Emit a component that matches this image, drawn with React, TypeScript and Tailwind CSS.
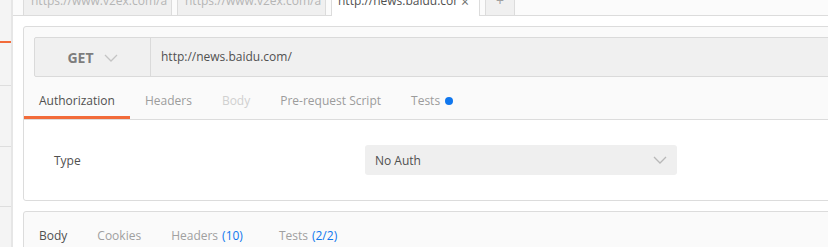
import React from "react";

const Chevron = ({ className }: { className?: string }) => (
  <svg viewBox="0 0 14 8" width="14" height="8" className={className} fill="none">
    <path d="M1 1l6 6 6-6" stroke="currentColor" strokeWidth="1.3" />
  </svg>
);

export default function App() {
  const reqTabs = [
    { label: "Authorization", cls: "text-[#505050]", active: true },
    { label: "Headers", cls: "text-[#9c9c9c]" },
    { label: "Body", cls: "text-[#d0d0d0]" },
    { label: "Pre-request Script", cls: "text-[#9c9c9c]" },
    { label: "Tests", cls: "text-[#9c9c9c]", dot: true },
  ];
  return (
    <div
      className="w-[828px] h-[247px] overflow-hidden flex bg-white"
      style={{ fontFamily: '"Open Sans", "Noto Sans", sans-serif' }}
    >
      {/* sidebar */}
      <div className="w-[13px] shrink-0 bg-[#f4f4f4] border-r-2 border-[#e6e6e6] flex flex-col">
        <div className="h-[41px]" />
        <div className="h-[2px] bg-[#f26b3a]" />
        <div className="h-[43px] border-b border-[#dedede]" />
        <div className="h-[61px] border-b border-[#dedede]" />
        <div className="h-[60px] border-b border-[#dedede]" />
      </div>

      {/* main */}
      <div className="flex-1 min-w-0 flex flex-col">
        {/* window tabs */}
        <div className="h-[16px] shrink-0 border-b border-[#dcdcdc] bg-[#fbfbfb] pl-[10px] flex items-end gap-[5px] text-[12px]">
          <div className="w-[149px] h-[30px] shrink-0 bg-[#f0f0f0] border border-b-0 border-[#dcdcdc] px-[7px] flex items-center overflow-hidden whitespace-nowrap text-[#b5b5b5]">
            https://www.v2ex.com/a
          </div>
          <div className="w-[149px] h-[30px] shrink-0 bg-[#f0f0f0] border border-b-0 border-[#dcdcdc] px-[7px] flex items-center overflow-hidden whitespace-nowrap text-[#b5b5b5]">
            https://www.v2ex.com/a
          </div>
          <div className="w-[149px] h-[31px] -mb-px shrink-0 bg-white border border-b-0 border-[#dcdcdc] pl-[6px] pr-[10px] flex items-center whitespace-nowrap text-[#505050]">
            <span className="overflow-hidden flex-1 min-w-0">http://news.baidu.com/</span>
            <span className="ml-[4px] shrink-0 text-[14px] text-[#707070]">×</span>
          </div>
          <div className="w-[30px] h-[30px] shrink-0 bg-[#f0f0f0] border border-b-0 border-[#dcdcdc] flex items-center justify-center text-[#a0a0a0] text-[14px]">
            +
          </div>
        </div>

        <div className="pl-[10px] pt-[10px] flex flex-col">
          {/* request card */}
          <div className="w-[840px] shrink-0 border border-[#dcdcdc] rounded-[3px] bg-[#fafafa] flex flex-col">
            <div className="px-[10px] pt-[10px]">
              <div className="h-[40px] flex bg-[#f0f0f0] border border-[#dadada] rounded-[2px]">
                <div className="w-[116px] shrink-0 border-r border-[#dadada] flex items-center justify-center gap-[10px] pt-px">
                  <span className="text-[14px] font-bold text-[#7d7d7d]">GET</span>
                  <Chevron className="text-[#c4c4c4]" />
                </div>
                <div className="flex items-center pl-[10px] text-[12px] text-[#505050]">
                  http://news.baidu.com/
                </div>
              </div>
            </div>
            <div className="h-[43px] flex border-b border-[#dcdcdc] text-[12px]">
              {reqTabs.map((t) => (
                <div
                  key={t.label}
                  className={`px-[15px] pt-[9px] flex items-center border-b-[3px] ${
                    t.active ? "border-[#f26b3a]" : "border-transparent"
                  } ${t.cls}`}
                >
                  {t.label}
                  {t.dot && <span className="ml-[5px] w-[8px] h-[8px] rounded-full bg-[#1077ee]" />}
                </div>
              ))}
            </div>
            <div className="h-[80px] bg-white flex items-center pl-[30px] text-[12px] text-[#505050] rounded-b-[3px]">
              <div className="w-[311px] pt-[2px]">Type</div>
              <div className="w-[312px] h-[30px] bg-[#efefef] rounded-[3px] pl-[10px] pr-[10px] flex items-center justify-between">
                <span className="pt-[1px]">No Auth</span>
                <Chevron className="text-[#b8b8b8]" />
              </div>
            </div>
          </div>

          {/* response card */}
          <div className="mt-[10px] w-[840px] h-[60px] shrink-0 border border-[#dcdcdc] rounded-[3px] bg-[#fafafa] flex items-start text-[12px]">
            <div className="h-[46px] flex">
              <div className="px-[15px] pt-[2px] flex items-center text-[#505050]">Body</div>
              <div className="px-[15px] pt-[2px] flex items-center text-[#a0a0a0]">Cookies</div>
              <div className="px-[15px] pt-[2px] flex items-center text-[#a0a0a0]">
                Headers<span className="ml-[4px] mr-[6px] text-[#1077ee]">(10)</span>
              </div>
              <div className="px-[15px] pt-[2px] flex items-center text-[#a0a0a0]">
                Tests<span className="ml-[4px] text-[#1077ee]">(2/2)</span>
              </div>
            </div>
          </div>
        </div>
      </div>
    </div>
  );
}
